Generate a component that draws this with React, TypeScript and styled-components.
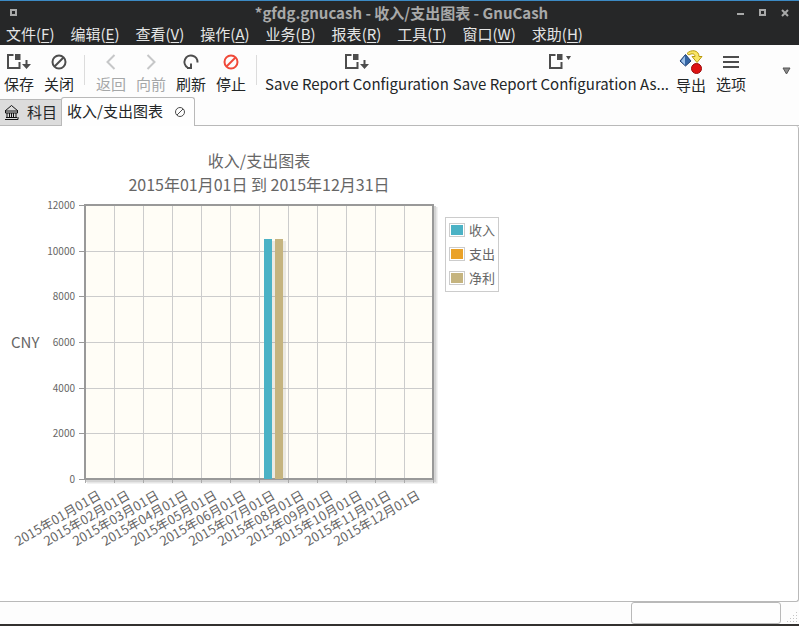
import React from "react";
import styled, { createGlobalStyle } from "styled-components";

const GlobalStyle = createGlobalStyle`
  * { box-sizing: border-box; }
  html, body, #root { height: 100%; margin: 0; }
  body, button, input {
    font-family: "Noto Sans CJK SC", "Noto Sans", sans-serif;
    font-size: 15px;
  }
  body { color: #232627; background: #fdfdfd; overflow: hidden; }
`;

const Window = styled.div`
  display: flex;
  flex-direction: column;
  min-height: 100vh;
  border-bottom: 2px solid #33312f;
`;

const TitleBar = styled.header`
  display: flex;
  align-items: center;
  height: 25px;
  padding: 0 10px;
  border-top: 1px solid #3c8ac4;
  background: #262728;
  color: #a8a9a9;
`;

const WindowTitle = styled.h1`
  flex: 1;
  margin: 0;
  padding-left: 48px;
  font-size: 15px;
  font-weight: 700;
  line-height: 22px;
  text-align: center;
  white-space: nowrap;
`;

const WindowButton = styled.button`
  display: flex;
  padding: 0;
  border: 0;
  background: none;
  color: inherit;
`;

const WindowControls = styled.div`
  display: flex;
  gap: 14px;
`;

const MenuBar = styled.nav`
  display: flex;
  align-items: flex-start;
  gap: 16px;
  height: 20px;
  padding-left: 6px;
  background: #262728;
`;

const MenuItem = styled.button`
  padding: 0;
  border: 0;
  background: none;
  color: #e4e5e5;
  line-height: 18px;
  white-space: nowrap;
  u { text-underline-offset: 2px; }
`;

const ToolBar = styled.div`
  display: flex;
  align-items: flex-start;
  gap: 10px;
  height: 52px;
  padding: 5px 8px 0 4px;
`;

const ToolButton = styled.button<{ $wide?: boolean }>`
  display: flex;
  flex-direction: column;
  align-items: center;
  margin: ${(p) => (p.$wide ? "0 -3px" : "0")};
  padding: 0;
  border: 0;
  background: none;
  color: #232627;
  line-height: 20px;
  white-space: nowrap;
  &:disabled { color: #a5a7a8; }
`;

const Separator = styled.div`
  width: 2px;
  height: 30px;
  margin-top: 5px;
  border-left: 1px solid #dcdcdc;
`;

const OverflowButton = styled.button`
  display: flex;
  margin: 17px 0 0 auto;
  padding: 0;
  border: 0;
  background: none;
`;

const TabStrip = styled.div`
  display: flex;
  align-items: flex-end;
  height: 29px;
  box-shadow: inset 0 -1px #b9b9b9;
`;

const Tab = styled.div<{ $active?: boolean }>`
  display: flex;
  align-items: flex-start;
  height: ${(p) => (p.$active ? "29px" : "27px")};
  padding: ${(p) => (p.$active ? "1px 8px 0 5px" : "0 4px")};
  border: 1px solid #b9b9b9;
  border-width: ${(p) => (p.$active ? "1px 1px 0" : "1px 0 1px")};
  border-radius: ${(p) => (p.$active ? "3px 3px 0 0" : "0")};
  background: ${(p) => (p.$active ? "#fefefe" : "#dcdcdc")};
`;

const TabLabel = styled.button`
  display: flex;
  align-items: center;
  gap: 8px;
  padding: 0;
  border: 0;
  background: none;
  color: #232627;
  line-height: 24px;
  white-space: nowrap;
`;

const TabClose = styled(WindowButton)`
  margin: 7px 0 0 11px;
`;

const Report = styled.main`
  flex: 1;
  padding-top: 22px;
  border: 1px solid #b9b9b9;
  border-width: 0 1px 1px 0;
  border-radius: 0 3px 3px 0;
  background: #ffffff;
`;

const Figure = styled.figure`
  display: grid;
  grid-template-columns: 445px max-content;
  margin: 0;
  color: #666666;
`;

const ChartTitle = styled.figcaption`
  padding: 0 4px 1px 77px;
  font-size: 16px;
  line-height: 24px;
  text-align: center;
`;

const Chart = styled.svg`
  grid-row: 2;
  display: block;
  fill: #666666;
  font-family: "Noto Sans CJK SC", "Noto Sans", sans-serif;
`;

const Legend = styled.ul`
  grid-row: 2;
  align-self: start;
  margin: 20px 0 0;
  padding: 0 3px 1px;
  border: 1px solid #cccccc;
  list-style: none;
  font-size: 13px;
`;

const LegendItem = styled.li`
  display: flex;
  align-items: center;
  gap: 4px;
  line-height: 24px;
`;

const Swatch = styled.span<{ $color: string }>`
  width: 16px;
  height: 14px;
  padding: 1px;
  border: 1px solid #cccccc;
  background: ${(p) => p.$color} content-box;
`;

const StatusBar = styled.footer`
  display: flex;
  justify-content: flex-end;
  height: 22px;
`;

const Progress = styled.div`
  width: 150px;
  height: 22px;
  border: 1px solid #b9b9b9;
  border-radius: 3px;
  background: #fefefe;
`;

const Grip = styled.svg`
  align-self: flex-end;
  margin: 0 2px 2px 6px;
`;

const menus = [
  ["文件", "F"], ["编辑", "E"], ["查看", "V"], ["操作", "A"], ["业务", "B"],
  ["报表", "R"], ["工具", "T"], ["窗口", "W"], ["求助", "H"],
];

const series = [
  { name: "收入", color: "#4bb2c5", value: 10500 },
  { name: "支出", color: "#eaa228", value: 0 },
  { name: "净利", color: "#c5b47f", value: 10500 },
];

const months = Array.from({ length: 12 }, (_, i) => String(i + 1).padStart(2, "0"));
const yTicks = [0, 2000, 4000, 6000, 8000, 10000, 12000];

const ToolIcon = ({ children }: { children: React.ReactNode }) => (
  <svg width="24" height="24" viewBox="0 0 24 24" fill="none" stroke="#4d4d4d" strokeWidth="2" aria-hidden="true">
    {children}
  </svg>
);

const Document = () => (
  <>
    <path d="M6.500 5H1V18H12.500V12" />
    <path d="M8 4h5.500v6H8z" fill="#4d4d4d" stroke="none" />
  </>
);

const SaveIcon = () => (
  <ToolIcon>
    <Document />
    <path d="M18.500 10h2v4h3.500l-4.500 5-4.500-5h3.500z" fill="#4d4d4d" stroke="none" />
  </ToolIcon>
);

const SaveAsIcon = () => (
  <ToolIcon>
    <Document />
    <path d="M17 6h5l-2.500 4z" fill="#4d4d4d" stroke="none" />
  </ToolIcon>
);

const BanIcon = ({ color = "#4d4d4d" }: { color?: string }) => (
  <ToolIcon>
    <g stroke={color}>
      <circle cx="12" cy="12" r="6.500" />
      <path d="M7.500 16.500l9-9" />
    </g>
  </ToolIcon>
);

const RefreshIcon = () => (
  <ToolIcon>
    <path d="M18.500 12.500A6.500 6.500 0 1 0 8.500 17.500" />
    <path d="M12 13.500V18H8" />
  </ToolIcon>
);

const ExportIcon = () => (
  <svg width="24" height="25" viewBox="0 0 24 25" aria-hidden="true">
    <path d="M6.500 4.500L12 11l-5.500 5L1 11z" fill="#3465a4" stroke="#1f3f73" />
    <path d="M6 6v9L2 11z" fill="#9cc0e8" />
    <path d="M8 3.500C12-1 20 0 20 6.500h3l-5 6-5-6h3C16 3.500 12.500 3 10 5z" fill="#f9e565" stroke="#b99a0b" />
    <circle cx="17.500" cy="18.500" r="5" fill="#de1212" stroke="#9a0a0a" />
  </svg>
);

const BankIcon = () => (
  <svg width="15" height="16" viewBox="0 0 15 16" fill="none" stroke="#111111" aria-hidden="true">
    <path d="M1 7L7.500 1.500 14 7zM1.500 7v2h12v-2M3 9v4M5.500 9v4M7.500 9v4M9.500 9v4M12 9v4M2 13.500h11M1 15.500h13V13" />
  </svg>
);

const SmallSquare = () => (
  <svg width="8" height="8" viewBox="0 0 8 8" fill="none" stroke="currentColor" strokeWidth="2" aria-hidden="true">
    <path d="M1 1h5v5h-5z" />
  </svg>
);

const left = 85;
const right = 433;
const top = 8;
const bottom = 282;
const yOf = (v: number) => Math.round(bottom - (v / 12000) * (bottom - top));

const PlotChart = () => (
  <Chart width="445" height="370" viewBox="0 0 445 370" role="img" aria-label="收入/支出图表">
    <path d={`M${left + 2} ${bottom + 2}H${right + 2}V${top + 2}`} fill="none" stroke="#e6e6e6" strokeWidth="5" />
    <path d={`M${left + 1} ${bottom + 1}H${right + 1}V${top + 1}`} fill="none" stroke="#d4d4d4" strokeWidth="4" />
    <rect x={left} y={top} width={right - left} height={bottom - top} fill="#fffdf6" />
    {months.map((m, i) => (
      <path key={m} d={`M${left + i * 29 + 0.5} ${top}V${bottom}`} stroke="#cccccc" />
    ))}
    {yTicks.map((v) => (
      <g key={v}>
        <path d={`M${left} ${yOf(v) + 0.5}H${right}`} stroke="#cccccc" />
        <path d={`M79 ${yOf(v) + 0.5}h6`} stroke="#999999" />
        <text x="75" y={yOf(v) + 4} fontSize="10" textAnchor="end">{v}</text>
      </g>
    ))}
    {[...months, "end"].map((m, i) => (
      <path key={m} d={`M${left + i * 29 + 0.5} ${bottom}v4`} stroke="#aaaaaa" />
    ))}
    <rect x={left} y={top} width={right - left} height={bottom - top} fill="none" stroke="#999999" strokeWidth="2" />
    {series.filter((s) => s.value > 0).map((s, i) => (
      <g key={s.name}>
        <rect x={266 + i * 11} y={yOf(s.value) + 2} width="9" height={bottom - yOf(s.value) - 3} fill="#000000" opacity="0.08" />
        <rect x={264 + i * 11} y={yOf(s.value)} width="8" height={bottom - yOf(s.value)} fill={s.color} />
      </g>
    ))}
    {months.map((m, i) => (
      <text key={m} fontSize="13" textAnchor="end" transform={`translate(${102 + i * 29} 301) rotate(-30)`}>
        {`2015年${m}月01日`}
      </text>
    ))}
    <text x="11" y="151" fontSize="15">CNY</text>
  </Chart>
);

export default function App() {
  return (
    <>
      <GlobalStyle />
      <Window>
        <TitleBar>
          <WindowButton aria-label="窗口菜单"><SmallSquare /></WindowButton>
          <WindowTitle>*gfdg.gnucash - 收入/支出图表 - GnuCash</WindowTitle>
          <WindowControls>
            <WindowButton aria-label="最小化">
              <svg width="8" height="8" viewBox="0 0 8 8" stroke="currentColor" strokeWidth="2"><path d="M0 5h7" /></svg>
            </WindowButton>
            <WindowButton aria-label="最大化"><SmallSquare /></WindowButton>
            <WindowButton aria-label="关闭窗口">
              <svg width="8" height="8" viewBox="0 0 8 8" stroke="currentColor" strokeWidth="2"><path d="M1 1l6 6M7 1l-6 6" /></svg>
            </WindowButton>
          </WindowControls>
        </TitleBar>
        <MenuBar>
          {menus.map(([name, key]) => (
            <MenuItem key={key}>{name}(<u>{key}</u>)</MenuItem>
          ))}
        </MenuBar>
        <ToolBar role="toolbar">
          <ToolButton><SaveIcon />保存</ToolButton>
          <ToolButton><BanIcon />关闭</ToolButton>
          <Separator />
          <ToolButton disabled>
            <ToolIcon><path d="M15.500 5l-7 7 7 7" stroke="#c6c7c8" /></ToolIcon>返回
          </ToolButton>
          <ToolButton disabled>
            <ToolIcon><path d="M8.500 5l7 7-7 7" stroke="#c6c7c8" /></ToolIcon>向前
          </ToolButton>
          <ToolButton><RefreshIcon />刷新</ToolButton>
          <ToolButton><BanIcon color="#f04a3a" />停止</ToolButton>
          <Separator />
          <ToolButton $wide><SaveIcon />Save Report Configuration</ToolButton>
          <ToolButton $wide><SaveAsIcon />Save Report Configuration As...</ToolButton>
          <ToolButton><ExportIcon />导出</ToolButton>
          <ToolButton>
            <ToolIcon><path d="M4 7h16M4 12h16M4 17h16" /></ToolIcon>选项
          </ToolButton>
          <OverflowButton aria-label="更多">
            <svg width="9" height="8" viewBox="0 0 9 8"><path d="M1 1h7L4.500 7z" fill="#8b8b8b" stroke="#555555" /></svg>
          </OverflowButton>
        </ToolBar>
        <TabStrip>
          <Tab><TabLabel><BankIcon />科目</TabLabel></Tab>
          <Tab $active>
            <TabLabel>收入/支出图表</TabLabel>
            <TabClose aria-label="关闭标签页">
              <svg width="12" height="12" viewBox="0 0 12 12" fill="none" stroke="#4d4d4d">
                <circle cx="6" cy="6" r="4.500" /><path d="M3 9l6-6" />
              </svg>
            </TabClose>
          </Tab>
        </TabStrip>
        <Report>
          <Figure>
            <ChartTitle>收入/支出图表<br />2015年01月01日 到 2015年12月31日</ChartTitle>
            <PlotChart />
            <Legend>
              {series.map((s) => (
                <LegendItem key={s.name}><Swatch $color={s.color} />{s.name}</LegendItem>
              ))}
            </Legend>
          </Figure>
        </Report>
        <StatusBar>
          <Progress role="progressbar" aria-label="进度" />
          <Grip width="10" height="10" viewBox="0 0 10 10" fill="#c4c4c4" aria-hidden="true">
            <path d="M9 0h1v1h-1zM6 3h1v1h-1zM9 3h1v1h-1zM3 6h1v1h-1zM6 6h1v1h-1zM9 6h1v1h-1zM0 9h1v1h-1zM3 9h1v1h-1zM6 9h1v1h-1zM9 9h1v1h-1z" />
          </Grip>
        </StatusBar>
      </Window>
    </>
  );
}
